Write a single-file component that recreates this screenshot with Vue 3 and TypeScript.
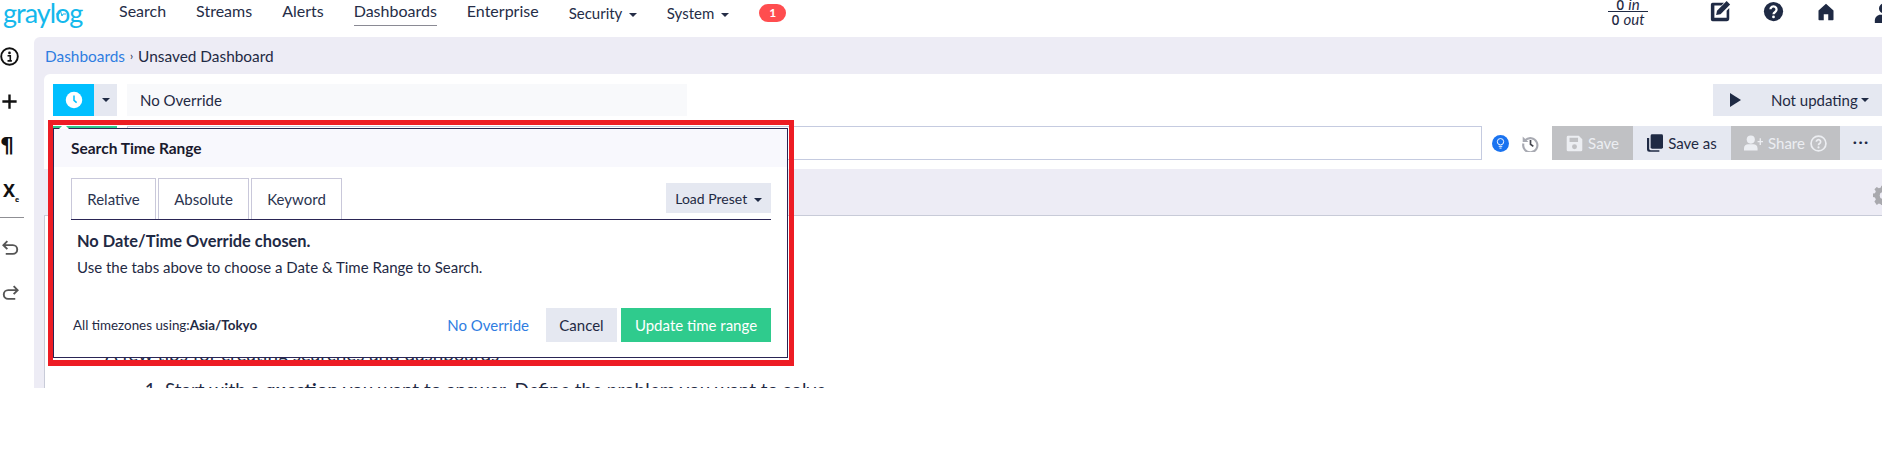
<script setup lang="ts">
const navItems: string[] = ['Search', 'Streams', 'Alerts', 'Dashboards', 'Enterprise']
const tabs: string[] = ['Relative', 'Absolute', 'Keyword']
</script>

<template>
  <div class="app">
    <header class="nav">
      <div class="logo">graylog<svg class="pulse" width="10" height="7" viewBox="0 0 10 7"><path d="M0 4h3l1.500-3 1.500 5L7 4h3" fill="none" stroke="#14b8ec" stroke-width="1"/></svg></div>
      <nav class="links">
        <a v-for="n in navItems" :key="n" class="link" :class="{ active: n === 'Dashboards' }">{{ n }}</a>
        <a class="link drop">Security <i class="caret"></i></a>
        <a class="link drop">System <i class="caret"></i></a>
        <span class="badge">1</span>
      </nav>
      <div class="nav-right">
        <div class="tp">
          <div class="tp-a"><b>0</b> <em>in</em></div>
          <div class="tp-b"><b>0</b> <em>out</em></div>
        </div>
        <svg class="ni i-edit" viewBox="0 0 24 24"><path fill="#1f2a44" d="M3 2h13l-3 3H5v14h14v-8l3-3v12a3 3 0 0 1-3 3H3a2 2 0 0 1-2-2V4a2 2 0 0 1 2-2z"/><path fill="#1f2a44" d="M19 0l4 4L12 15l-5 1 1-5z"/></svg>
        <svg class="ni i-help" viewBox="0 0 24 24"><circle cx="12" cy="12" r="11" fill="#1f2a44"/><path fill="none" stroke="#fff" stroke-width="2.6" d="M8.5 9.5a3.5 3.5 0 1 1 5.4 3c-1.2.8-1.9 1.3-1.9 2.6"/><circle cx="12" cy="18.2" r="1.6" fill="#fff"/></svg>
        <svg class="ni i-home" viewBox="0 0 24 24"><path fill="#1f2a44" d="M12 1l10 9v12a1 1 0 0 1-1 1h-6v-8H9v8H3a1 1 0 0 1-1-1V10z"/></svg>
        <svg class="ni i-user" viewBox="0 0 24 24"><circle cx="12" cy="6.5" r="6" fill="#1f2a44"/><path fill="#1f2a44" d="M1 24v-3c0-4 3-7 7-7h8c4 0 7 3 7 7v3z"/></svg>
      </div>
    </header>

    <div class="body">
      <aside class="side">
        <svg class="si s-info" viewBox="0 0 24 24"><circle cx="12" cy="12" r="10.5" fill="none" stroke="#111" stroke-width="2.4"/><circle cx="12" cy="7.5" r="1.7" fill="#111"/><path d="M9.5 11H13v6.5h2M9.5 17.5H13" fill="none" stroke="#111" stroke-width="2"/></svg>
        <svg class="si s-plus" viewBox="0 0 24 24"><path d="M12 3v18M3 12h18" stroke="#111" stroke-width="3" fill="none"/></svg>
        <span class="s-para">¶</span>
        <span class="s-x">X<sub>e</sub></span>
        <div class="s-sep"></div>
        <svg class="si s-undo" viewBox="0 0 24 24"><path d="M8 4L3 9l5 5M3 9h12a5.500 5.500 0 0 1 0 11H6" fill="none" stroke="#555" stroke-width="2.4"/></svg>
        <svg class="si s-redo" viewBox="0 0 24 24"><path d="M16 4l5 5-5 5M21 9H9a5.500 5.500 0 0 0 0 11h9" fill="none" stroke="#555" stroke-width="2.4"/></svg>
      </aside>

      <main class="main">
        <div class="crumbs"><a>Dashboards</a><span class="sep">›</span><span>Unsaved Dashboard</span></div>

        <section class="card">
          <div class="row1">
            <div class="clock-btn">
              <svg width="18" height="18" viewBox="0 0 24 24"><circle cx="12" cy="12" r="11" fill="#fff"/><path d="M12 6v6.500l3.500 3" fill="none" stroke="#00bfff" stroke-width="2"/></svg>
            </div>
            <div class="clock-caret"><i class="caret dark"></i></div>
            <div class="override">No Override</div>
            <div class="updating">
              <svg class="play" width="11" height="14" viewBox="0 0 11 14"><path d="M0 0l11 7-11 7z" fill="#1f2a44"/></svg>
              <span>Not updating</span><i class="caret dark"></i>
            </div>
          </div>
          <div class="row2">
            <div class="search-btn"></div>
            <div class="query"></div>
            <svg class="bulb" width="17" height="17" viewBox="0 0 24 24"><circle cx="12" cy="12" r="12" fill="#1a73f0"/><circle cx="12" cy="9.500" r="4.500" fill="none" stroke="#fff" stroke-width="1.300"/><path d="M9.500 16h5M10.500 18.500h3" stroke="#fff" stroke-width="1.300"/></svg>
            <svg class="hist" width="17" height="17" viewBox="0 0 24 24"><path d="M4.500 7.500A10 10 0 1 1 2 12" fill="none" stroke="#a8aab2" stroke-width="3"/><path d="M1 2v8h8z" fill="#a8aab2"/><path d="M12 7v6l4 3" fill="none" stroke="#44464f" stroke-width="2.400"/></svg>
            <div class="act off a-save">
              <svg width="17" height="17" viewBox="0 0 24 24"><path fill="#eceef2" fill-rule="evenodd" d="M3 1h15l5 5v15a2 2 0 0 1-2 2H3a2 2 0 0 1-2-2V3a2 2 0 0 1 2-2zm2 3v6h12V4zm7 9a3.500 3.500 0 1 0 0 7 3.500 3.500 0 0 0 0-7z"/></svg>
              <span>Save</span>
            </div>
            <div class="act on a-as">
              <svg width="16" height="18" viewBox="0 0 22 24"><path fill="#1f2a44" d="M7 0h13a2 2 0 0 1 2 2v16a2 2 0 0 1-2 2H7a2 2 0 0 1-2-2V2a2 2 0 0 1 2-2z"/><path fill="#1f2a44" d="M0 5h3v15a2 2 0 0 0 2 2h12v2H3a3 3 0 0 1-3-3z"/></svg>
              <span>Save as</span>
            </div>
            <div class="act off a-share">
              <svg width="19" height="16" viewBox="0 0 28 22"><circle cx="10" cy="6" r="6" fill="#eceef2"/><path fill="#eceef2" d="M0 22v-3c0-4 3-6 6-6h8c3 0 6 2 6 6v3zM23 4h2v4h3v2h-3v4h-2v-4h-3V8h3z"/></svg>
              <span>Share</span>
              <svg width="17" height="17" viewBox="0 0 24 24"><circle cx="12" cy="12" r="10.500" fill="none" stroke="#eceef2" stroke-width="2.400"/><path fill="none" stroke="#eceef2" stroke-width="2.400" d="M9 9.500a3 3 0 1 1 4.500 2.600c-1 .6-1.500 1-1.500 2.200"/><circle cx="12" cy="17.500" r="1.500" fill="#eceef2"/></svg>
            </div>
            <div class="more">···</div>
          </div>
        </section>

        <div class="tabbar">
          <svg class="gear" width="20" height="20" viewBox="0 0 24 24"><path fill="#a9a9ae" fill-rule="evenodd" d="M10 1h4l.6 3 2.400 1 2.600-1.700 2.800 2.800L20.700 8.700l1 2.300 3 .6v4l-3 .6-1 2.400 1.700 2.500-2.800 2.800-2.600-1.700-2.400 1-.6 3h-4l-.6-3-2.400-1-2.500 1.700L1.700 19.900l1.700-2.500-1-2.400-3-.6v-4l3-.6 1-2.300L1.700 5.100l2.800-2.800L7 4l2.400-1zM12 8.500a4 4 0 1 0 0 8 4 4 0 0 0 0-8z"/></svg>
        </div>

        <article class="content">
          <p class="lead">A few tips for creating searches and dashboards</p>
          <ol>
            <li>Start with a <b>question</b> you want to answer. Define the problem you want to solve</li>
          </ol>
        </article>
      </main>
    </div>

    <div class="popover">
      <i class="notch"></i>
      <h3 class="pop-title">Search Time Range</h3>
      <div class="pop-body">
        <div class="tabs">
          <a v-for="t in tabs" :key="t" class="tab">{{ t }}</a>
          <button class="preset">Load Preset <i class="caret dark"></i></button>
        </div>
        <h4 class="no-date">No Date/Time Override chosen.</h4>
        <p class="hint">Use the tabs above to choose a Date &amp; Time Range to Search.</p>
        <div class="pop-foot">
          <div class="tz">All timezones using:<b>Asia/Tokyo</b></div>
          <a class="no-over">No Override</a>
          <button class="cancel">Cancel</button>
          <button class="update">Update time range</button>
        </div>
      </div>
    </div>
    <div class="redbox"></div>
  </div>
</template>

<style>
html, body { margin: 0; background: #fff; }
</style>

<style scoped>
* { box-sizing: border-box; }
.app { position: relative; width: 1882px; height: 388px; overflow: hidden; background: #fff; color: #1f2a44; font-family: "Lato", "Liberation Sans", sans-serif; font-size: 14px; display: flex; flex-direction: column; }
.nav { flex: none; height: 37px; display: flex; align-items: flex-start; }
.logo { position: relative; width: 119px; flex: none; padding-left: 3px; font-size: 27px; line-height: 26px; color: #14b8ec; letter-spacing: -1px; height: 37px; }
.pulse { position: absolute; left: 56px; top: 10px; }
.links { display: flex; align-items: flex-start; flex: 1; }
.link { display: block; font-size: 16px; line-height: 22px; height: 26px; margin-right: 30px; color: #252d47; }
.link.active { border-bottom: 1px solid #8a8a94; }
.drop { margin-top: 2px; font-size: 15px; }
.caret { display: inline-block; vertical-align: middle; margin-left: 3px; border: 4px solid transparent; border-top-color: #252d47; border-bottom: 0; }
.caret.dark { border-top-color: #1f2a44; }
.badge { width: 27px; height: 18px; margin-top: 4px; border-radius: 9px; background: #ff4d4f; color: #fff; font-size: 12px; font-weight: 700; line-height: 18px; text-align: center; }
.nav-right { display: flex; align-items: flex-start; width: 280px; flex: none; overflow: hidden; }
.tp { width: 40px; margin-left: 6px; font-size: 15px; line-height: 14px; text-align: center; flex: none; }
.tp b { font-family: "Noto Sans", sans-serif; font-weight: 500; font-size: 14px; }
.tp em { font-style: italic; }
.tp-a { border-bottom: 1px solid #1f2a44; height: 12px; line-height: 9px; overflow: visible; }
.ni { width: 21px; height: 21px; margin-top: 1px; flex: none; }
.i-edit { margin-left: 62px; }
.i-help { margin-left: 32px; }
.i-home { margin-left: 33px; width: 18px; height: 18px; margin-top: 3px; }
.i-user { margin-left: 39px; width: 20px; height: 20px; margin-top: 3px; }

.body { flex: 1; display: flex; min-height: 0; }
.side { width: 34px; flex: none; display: flex; flex-direction: column; align-items: flex-start; position: relative; }
.si { display: block; width: 19px; height: 19px; flex: none; }
.s-info { margin-top: 10px; margin-left: 0; }
.s-plus { margin-top: 26px; margin-left: 0; }
.s-para { font-size: 22px; font-weight: 700; line-height: 26px; margin-top: 22px; margin-left: 0; color: #111; font-family: "DejaVu Sans", sans-serif; }
.s-x { font-size: 18px; font-weight: 700; line-height: 24px; margin-top: 19px; margin-left: 3px; color: #111; font-family: "Noto Sans", sans-serif; }
.s-x sub { font-size: 7px; }
.s-sep { width: 24px; height: 1px; background: #8f8f94; margin-top: 5px; flex: none; }
.s-undo { margin-top: 20px; margin-left: 1px; }
.s-redo { margin-top: 26px; margin-left: 1px; }

.main { flex: 1; min-width: 0; background: #edecf5; border-top-left-radius: 6px; padding-left: 10px; display: flex; flex-direction: column; }
.crumbs { height: 37px; flex: none; margin-left: 1px; display: flex; align-items: center; font-size: 15.4px; }
.crumbs a { color: #2f7de1; }
.crumbs .sep { margin: 0 5px; font-size: 11px; }
.card { height: 95px; flex: none; background: #fff; border-top-left-radius: 6px; padding: 10px 0 0 9px; }
.row1 { display: flex; height: 32px; }
.clock-btn { width: 41px; background: #00bfff; display: flex; align-items: center; justify-content: center; }
.clock-caret { width: 23px; background: #e5e8f1; display: flex; align-items: center; justify-content: center; }
.clock-caret .caret { margin: 0; }
.override { width: 560px; margin-left: 10px; background: #f8f9fb; padding-left: 13px; font-size: 15px; line-height: 32px; }
.updating { margin-left: auto; width: 169px; background: #e5e8f1; display: flex; align-items: center; padding-left: 17px; font-size: 15px; }
.play { margin-right: 30px; }
.row2 { display: flex; align-items: center; height: 34px; margin-top: 10px; }
.row2 > * { flex: none; }
.search-btn { width: 64px; height: 34px; background: #2fcb8d; }
.query { width: 1355px; height: 34px; margin-left: 10px; background: #fff; border: 1px solid #c5cbe0; }
.bulb { margin-left: 10px; }
.hist { margin-left: 13px; }
.act { height: 34px; display: flex; align-items: center; font-size: 15px; justify-content: center; gap: 5px; }
.a-save { width: 81px; margin-left: 13px; }
.a-as { width: 98px; }
.a-share { width: 109px; }
.off { background: #c0c1c4; color: #eceef2; }
.on { background: #e5e8f1; }
.more { width: 42px; height: 34px; background: #e5e8f1; text-align: center; font-size: 18px; line-height: 30px; letter-spacing: 1px; color: #1f2a44; }
.tabbar { height: 47px; flex: none; display: flex; justify-content: flex-end; align-items: center; overflow: hidden; border-bottom: 1px solid #c8cbd8; }
.gear { margin-right: -11px; margin-top: 5px; }
.content { flex: 1; background: #fff; border-left: 1px solid #c8cbd8; padding: 123px 0 0 60px; font-size: 18.9px; line-height: 29px; color: #1f2a44; overflow: hidden; }
.content p, .content ol { margin: 0; }
.content ol { padding-left: 60px; margin-top: 7px; }

.popover { position: absolute; left: 53px; top: 128px; width: 735px; height: 230px; background: #fff; border: 1px solid #2a2555; display: flex; flex-direction: column; }
.notch { position: absolute; left: 5px; top: -5px; border: 5px solid transparent; border-top: 0; border-bottom-color: #fff; }
.pop-title { margin: 0; height: 38px; background: #f8f8fd; padding-left: 17px; font-size: 15.5px; font-weight: 700; line-height: 38px; color: #1a1a2e; flex: none; }
.pop-body { flex: 1; padding: 11px 16px 15px 17px; display: flex; flex-direction: column; }
.tabs { display: flex; align-items: flex-end; gap: 2px; height: 42px; border-bottom: 1px solid #2a2555; flex: none; }
.tab { height: 41px; border: 1px solid #c9c8da; border-bottom: 0; font-size: 15px; line-height: 40px; text-align: center; color: #2b3450; }
.tab:nth-child(1) { width: 85px; }
.tab:nth-child(2) { width: 91px; }
.tab:nth-child(3) { width: 91px; }
.preset { margin: 0 0 6px auto; width: 105px; height: 30px; border: 0; background: #e5e8f1; color: #1f2a44; font: inherit; font-size: 14px; padding: 0; }
.no-date { margin: 9px 0 0 6px; font-size: 16.4px; font-weight: 700; line-height: 24px; }
.hint { margin: 4px 0 0 6px; font-size: 15px; line-height: 20px; }
.pop-foot { margin-top: auto; display: flex; align-items: center; height: 34px; }
.tz { font-size: 13.4px; margin-left: 2px; flex: 1; }
.no-over { color: #2f7de1; font-size: 15px; margin-right: 17px; }
.cancel { width: 71px; height: 34px; border: 0; background: #e5e8f1; color: #1f2a44; font: inherit; font-size: 15px; padding: 0; }
.update { width: 150px; height: 34px; margin-left: 4px; border: 0; background: #2fcb8d; color: #fff; font: inherit; font-size: 15px; padding: 0; }
.redbox { position: absolute; left: 48px; top: 120px; width: 746px; height: 246px; border: 5px solid #ed1c24; border-bottom-width: 6px; pointer-events: none; }
</style>
